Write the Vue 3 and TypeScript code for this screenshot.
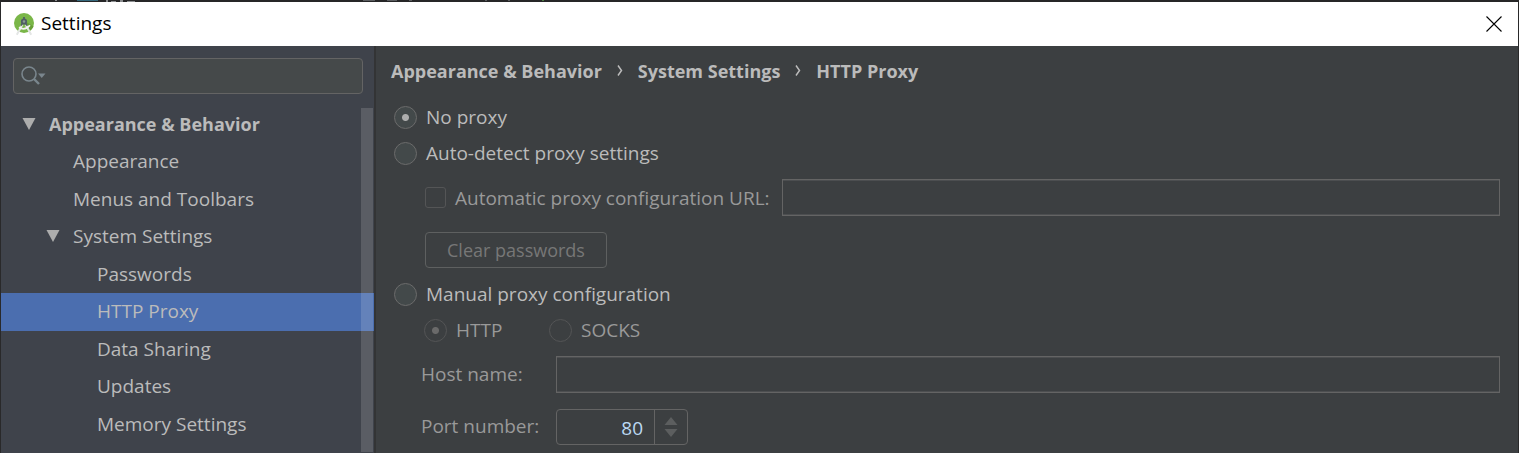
<script setup lang="ts">
import { ref } from 'vue'

interface TreeItem {
  label: string
  level: number
  expanded?: boolean
}

const items: TreeItem[] = [
  { label: 'Appearance & Behavior', level: 0, expanded: true },
  { label: 'Appearance', level: 1 },
  { label: 'Menus and Toolbars', level: 1 },
  { label: 'System Settings', level: 1, expanded: true },
  { label: 'Passwords', level: 2 },
  { label: 'HTTP Proxy', level: 2 },
  { label: 'Data Sharing', level: 2 },
  { label: 'Updates', level: 2 },
  { label: 'Memory Settings', level: 2 },
]

const crumbs = ['Appearance & Behavior', 'System Settings', 'HTTP Proxy']

const selected = ref('HTTP Proxy')
const query = ref('')
const mode = ref('none')
const protocol = ref('http')
const port = ref('80')
</script>

<template>
  <div class="window">
    <div class="backdrop">
      <svg width="620" height="2" viewBox="0 0 620 2" aria-hidden="true">
        <path d="M54 0h2v1h-2z M105 0h2v2h-2z M110 1h5v1h-5z M119 0h3v2h-3z M126 1h8v1h-8z" fill="#8a8c8e" />
        <path d="M76 0h21v1h-21z" fill="#35687c" />
        <path d="M362 0h12v1h-12z M386 0h10v1h-10z M408 0h3v1h-3z M484 0h2v1h-2z M507 0h2v1h-2z" fill="#5b5d60" />
        <path d="M541 0h2v1h-2z" fill="#4c7a42" />
      </svg>
    </div>
    <header class="titlebar">
      <svg class="logo" width="22" height="23" viewBox="0 0 22 23" aria-hidden="true">
        <circle cx="10" cy="10" r="10" fill="#7ab648" />
        <path d="M12.500 9 L19.500 13.500 A10 10 0 0 1 15 18.500 Z" fill="#689f38" />
        <path d="M8.500 11.500 L2.800 21.800 M11.500 11.500 L17.200 21.800" stroke="#e4e6e5" stroke-width="2" fill="none" />
        <path d="M5 14.200 Q10.500 18.200 16 12.200" stroke="#f4f4f4" stroke-width="1.700" fill="none" />
        <path d="M9.100 4h1.800v2h-1.800z" fill="#4f5d64" />
        <circle cx="10" cy="8.500" r="2.200" fill="#8a9a94" stroke="#4f5d64" stroke-width="1.800" />
        <path d="M8.300 10.200 L7.200 12.600 M11.700 10.200 L12.800 12.600" stroke="#4f5d64" stroke-width="1.600" />
      </svg>
      <h1 class="title">Settings</h1>
      <button class="close" type="button" aria-label="Close">
        <svg width="16" height="16" viewBox="0 0 16 16" aria-hidden="true">
          <path d="M0.500 0.500 L15.500 15.500 M15.500 0.500 L0.500 15.500" stroke="#000" stroke-width="1.100" />
        </svg>
      </button>
    </header>

    <div class="body">
      <aside class="sidebar">
        <div class="search">
          <button class="search-menu" type="button" aria-label="Search history">
            <svg width="25" height="20" viewBox="0 0 25 20" aria-hidden="true">
              <circle cx="8" cy="8" r="7" fill="none" stroke="#7a868d" stroke-width="1.600" />
              <path d="M13 13 L18 18" stroke="#7a868d" stroke-width="2.400" />
              <path d="M17 7.500h7.500l-3.750 4.500z" fill="#7a868d" />
            </svg>
          </button>
          <input v-model="query" class="search-input" type="text" aria-label="Search settings" />
        </div>
        <nav class="tree-wrap" aria-label="Settings categories">
          <ul class="tree">
            <li v-for="item in items" :key="item.label" class="tree-row">
              <button
                type="button"
                class="tree-item"
                :class="['level-' + item.level, { selected: selected === item.label }]"
                @click="selected = item.label"
              >
                <span class="arrow">
                  <svg v-if="item.expanded" width="14" height="12" viewBox="0 0 14 12" aria-hidden="true">
                    <path d="M0.500 0h13l-6.500 12z" fill="#adadad" />
                  </svg>
                </span>
                <span>{{ item.label }}</span>
              </button>
            </li>
          </ul>
          <div class="scroll-thumb"></div>
        </nav>
      </aside>

      <main class="content">
        <nav class="crumbs" aria-label="Breadcrumb">
          <template v-for="(crumb, i) in crumbs" :key="crumb">
            <svg v-if="i > 0" class="chevron" width="6" height="12" viewBox="0 0 6 12" aria-hidden="true">
              <path d="M1 0.500 L4.500 5.500 L1 10.500" fill="none" stroke="#bbb" stroke-width="1.500" />
            </svg>
            <span>{{ crumb }}</span>
          </template>
        </nav>

        <form class="form" @submit.prevent>
          <label class="option">
            <input v-model="mode" class="radio" type="radio" name="mode" value="none" />
            <span>No proxy</span>
          </label>
          <label class="option">
            <input v-model="mode" class="radio" type="radio" name="mode" value="auto" />
            <span>Auto-detect proxy settings</span>
          </label>

          <div class="row auto-row">
            <label class="option url-option">
              <input class="check" type="checkbox" disabled />
              <span>Automatic proxy configuration URL:</span>
            </label>
            <input class="field" type="text" aria-label="Automatic proxy configuration URL" disabled />
          </div>

          <div class="row clear-row">
            <button class="clear" type="button" disabled>Clear passwords</button>
          </div>

          <label class="option manual">
            <input v-model="mode" class="radio" type="radio" name="mode" value="manual" />
            <span>Manual proxy configuration</span>
          </label>

          <div class="protocols">
            <label class="option protocol">
              <input v-model="protocol" class="radio" type="radio" name="protocol" value="http" disabled />
              <span>HTTP</span>
            </label>
            <label class="option protocol">
              <input v-model="protocol" class="radio" type="radio" name="protocol" value="socks" disabled />
              <span>SOCKS</span>
            </label>
          </div>

          <div class="row host-row">
            <label class="field-label" for="host">Host name:</label>
            <input id="host" class="field" type="text" disabled />
          </div>

          <div class="row port-row">
            <label class="field-label" for="port">Port number:</label>
            <div class="spinner">
              <input id="port" v-model="port" class="port" type="text" disabled />
              <div class="steps">
                <button class="step" type="button" aria-label="Increase port" disabled>
                  <svg width="14" height="8" viewBox="0 0 14 8" aria-hidden="true">
                    <path d="M0.500 8h13l-6.500 -8z" fill="#5c5e5f" />
                  </svg>
                </button>
                <button class="step" type="button" aria-label="Decrease port" disabled>
                  <svg width="14" height="8" viewBox="0 0 14 8" aria-hidden="true">
                    <path d="M0.500 0h13l-6.500 8z" fill="#5c5e5f" />
                  </svg>
                </button>
              </div>
            </div>
          </div>
        </form>
      </main>
    </div>
  </div>
</template>

<style>
body {
  background: #3c3f41;
}
</style>

<style scoped>
.window {
  display: flex;
  flex-direction: column;
  box-sizing: border-box;
  min-height: 100vh;
  border: 1px solid #29292a;
  border-width: 0 1px;
  background: #3c3f41;
  color: #bbb;
  font: 19px/24px "Open Sans", "Noto Sans", sans-serif;
}
.window * {
  box-sizing: border-box;
}
button,
input {
  margin: 0;
  padding: 0;
  border: 0;
  background: none;
  color: inherit;
  font: inherit;
}
svg {
  display: block;
  flex: none;
}
.backdrop {
  height: 2px;
  overflow: hidden;
  background: #262627;
}
.titlebar {
  display: flex;
  align-items: center;
  height: 44px;
  padding: 0 16px 0 13px;
  background: #fff;
  color: #000;
}
.title {
  flex: 1;
  margin: 0 0 0 5px;
  padding-bottom: 2px;
  font-size: 19px;
  font-weight: 400;
}
.body {
  display: flex;
  flex: 1;
}
.sidebar {
  flex: none;
  width: 375px;
  padding-top: 12px;
  border-right: 2px solid #333435;
  background: #3f434b;
}
.search {
  display: flex;
  align-items: center;
  height: 36px;
  margin: 0 11px 12px 12px;
  border: 1px solid #646464;
  border-radius: 4px;
  background: #45494a;
}
.search-menu {
  margin-left: 7px;
}
.search-input {
  flex: 1;
  min-width: 0;
  height: 100%;
  outline: 0;
}
.tree-wrap {
  position: relative;
}
.tree {
  margin: 0;
  padding: 0;
  list-style: none;
}
.tree-row {
  height: 38px;
}
.tree-row:nth-child(odd) {
  height: 37px;
}
.tree-item {
  display: flex;
  align-items: center;
  width: 100%;
  height: 100%;
  padding-bottom: 2px;
  text-align: left;
  white-space: nowrap;
}
.arrow {
  flex: none;
  width: 27px;
}
.level-0 {
  padding-left: 21px;
  font-size: 18px;
  font-weight: 700;
}
.level-1 {
  padding-left: 45px;
}
.level-2 {
  padding-left: 69px;
}
.selected {
  background: #4b6eaf;
}
.scroll-thumb {
  position: absolute;
  top: 2px;
  right: 1px;
  bottom: -9px;
  width: 12px;
  background: rgba(255, 255, 255, 0.14);
}
.content {
  flex: 1;
  min-width: 0;
  padding: 7px 18px 0 15px;
}
.crumbs {
  display: flex;
  align-items: center;
  height: 36px;
  font-size: 18px;
  font-weight: 700;
  white-space: nowrap;
}
.chevron {
  margin: 0 15px;
}
.form {
  display: flex;
  flex-direction: column;
  align-items: stretch;
  padding-top: 10px;
}
.option {
  display: flex;
  align-items: center;
  gap: 9px;
  height: 36px;
  padding-left: 3px;
  white-space: nowrap;
}
.radio {
  appearance: none;
  flex: none;
  width: 23px;
  height: 23px;
  border: 1px solid #6b6b6b;
  border-radius: 50%;
  background: #43494a;
}
.radio:checked {
  background: radial-gradient(circle, #adadad 3px, #43494a 4px);
}
.radio:disabled {
  border-color: #545556;
  background: #3c3f41;
}
.radio:disabled:checked {
  background: radial-gradient(circle, #6a6a6a 3px, #3c3f41 4px);
}
.row {
  display: flex;
  align-items: center;
}
.auto-row {
  margin-top: 8px;
  padding-left: 31px;
  color: #999;
}
.url-option {
  flex: none;
  width: 360px;
}
.check {
  appearance: none;
  flex: none;
  width: 21px;
  height: 21px;
  border: 1px solid #545556;
  border-radius: 3px;
}
.field {
  flex: 1;
  min-width: 0;
  height: 37px;
  padding: 0 8px;
  border: 1px solid #646464;
  box-shadow: inset 0 1px #4c4e50, inset 0 -1px #4c4e50;
}
.clear-row {
  margin-top: 16px;
  padding-left: 34px;
}
.clear {
  width: 182px;
  height: 36px;
  border: 1px solid #5e6060;
  border-radius: 4px;
  color: #777;
  font-size: 18px;
}
.manual {
  margin-top: 8px;
}
.protocols {
  display: flex;
  padding-left: 30px;
  color: #999;
}
.protocol {
  width: 125px;
}
.host-row {
  margin-top: 8px;
  padding-left: 30px;
}
.port-row {
  margin-top: 16px;
  padding-left: 30px;
}
.field-label {
  flex: none;
  width: 135px;
  padding-bottom: 2px;
  color: #999;
}
.spinner {
  display: flex;
  width: 132px;
  height: 36px;
  border: 1px solid #646464;
  border-radius: 4px;
}
.port {
  flex: 1;
  min-width: 0;
  padding: 2px 11px 0 8px;
  color: #bbd8f2;
  text-align: right;
}
.steps {
  display: flex;
  flex-direction: column;
  justify-content: center;
  align-items: center;
  gap: 4px;
  width: 33px;
  border-left: 1px solid #646464;
}
</style>
